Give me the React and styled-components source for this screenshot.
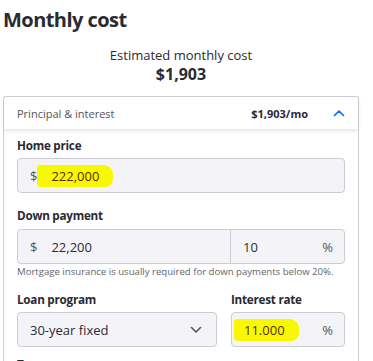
import React from 'react';
import styled, { createGlobalStyle } from 'styled-components';

const GlobalStyle = createGlobalStyle`
  body {
    margin: 0;
    background: #fff;
    font-family: "Open Sans", "Noto Sans", sans-serif;
    color: #2a2a33;
    overflow: hidden;
  }
`;

const Page = styled.div`
  padding: 6px 14px 0 3px;
  height: 361px;
  overflow: hidden;
`;

const Title = styled.h2`
  margin: 0;
  font-size: 20px;
  font-weight: 700;
  line-height: 28px;
  letter-spacing: -0.55px;
`;

const Summary = styled.div`
  margin-top: 13px;
  text-align: center;
  font-size: 13px;
  line-height: 17px;
`;

const Total = styled.div`
  font-size: 16px;
  font-weight: 700;
  line-height: 20px;
`;

const Card = styled.div`
  margin-top: 12px;
  border: 1px solid #d1d1d5;
  border-radius: 3px 3px 0 0;
  border-bottom: none;
`;

const Header = styled.div`
  display: flex;
  align-items: center;
  height: 32px;
  padding: 0 13px 0 13px;
  font-size: 11px;
  box-shadow: 0 2px 4px rgba(0, 0, 0, 0.1);
`;

const HeaderLabel = styled.span`
  flex: 1;
  color: #54545a;
`;

const HeaderValue = styled.span`
  font-weight: 700;
  margin-right: 25px;
`;

const Body = styled.div`
  padding: 8px 13px 0 13px;
`;

const Field = styled.div`
  margin-bottom: ${({ $gap }) => $gap || 14}px;
`;

const Label = styled.div`
  font-size: 11.7px;
  font-weight: 700;
  line-height: 17px;
  letter-spacing: -0.25px;
  margin-bottom: ${({ $gap }) => $gap ?? 4}px;
  margin-top: ${({ $top }) => $top || 0}px;
  white-space: nowrap;
`;

const InputBox = styled.div`
  display: flex;
  height: 35px;
  background: #f4f4f8;
  border: 1px solid #ccccd2;
  border-radius: 4px;
  box-sizing: border-box;
  font-size: 13px;
  overflow: hidden;
`;

const Segment = styled.div`
  display: flex;
  align-items: center;
  box-sizing: border-box;
  flex: ${({ $width }) => ($width ? `0 0 ${$width}px` : 1)};
  padding: 0 11px 0 12px;
  border-left: ${({ $divided }) => ($divided ? '1px solid #ccccd2' : 'none')};
`;

const Affix = styled.span`
  color: #54545a;
  margin-right: ${({ $right }) => ($right ? 0 : 14)}px;
  margin-left: ${({ $right }) => ($right ? 'auto' : 0)};
`;

const Value = styled.span`
  color: #2a2a33;
`;

const Marked = styled.span`
  background: #f8f800;
  padding: 2px 14px 2px ${({ $pad }) => $pad || 12}px;
  margin-left: ${({ $shift }) => $shift || 0}px;
  border-radius: 3px 9px 8px 4px;
  color: #5a2a10;
`;

const Hint = styled.div`
  font-size: 9.6px;
  color: #64646a;
  line-height: 14px;
  margin-top: 1px;
  white-space: nowrap;
`;

const Row = styled.div`
  display: flex;
  gap: 14px;
`;

const Column = styled.div`
  flex: ${({ $width }) => ($width ? `0 0 ${$width}px` : 1)};
`;

const Select = styled(InputBox)`
  align-items: center;
  justify-content: space-between;
  padding: 0 14px 0 12px;
`;

const Chevron = ({ up, color }) => (
  <svg width="12" height="8" viewBox="0 0 12 8" fill="none">
    <path
      d={up ? 'M1.5 6.5 L6 2 L10.5 6.5' : 'M1.5 1.5 L6 6 L10.5 1.5'}
      stroke={color}
      strokeWidth="1.6"
      strokeLinecap="round"
      strokeLinejoin="round"
    />
  </svg>
);

export default function App() {
  return (
    <>
      <GlobalStyle />
      <Page>
        <Title>Monthly cost</Title>
        <Summary>
          Estimated monthly cost
          <Total>$1,903</Total>
        </Summary>
        <Card>
          <Header>
            <HeaderLabel>Principal &amp; interest</HeaderLabel>
            <HeaderValue>$1,903/mo</HeaderValue>
            <Chevron up color="#006aff" />
          </Header>
          <Body>
            <Field>
              <Label>Home price</Label>
              <InputBox>
                <Segment>
                  <Affix>$</Affix>
                  <Marked $shift={-14} $pad={14}>222,000</Marked>
                </Segment>
              </InputBox>
            </Field>
            <Field $gap={12}>
              <Label $gap={5}>Down payment</Label>
              <InputBox>
                <Segment>
                  <Affix>$</Affix>
                  <Value>22,200</Value>
                </Segment>
                <Segment $width={114} $divided>
                  <Value>10</Value>
                  <Affix $right>%</Affix>
                </Segment>
              </InputBox>
              <Hint>Mortgage insurance is usually required for down payments below 20%.</Hint>
            </Field>
            <Row>
              <Column>
                <Label>Loan program</Label>
                <Select>
                  <Value>30-year fixed</Value>
                  <Chevron color="#54545a" />
                </Select>
              </Column>
              <Column $width={114}>
                <Label>Interest rate</Label>
                <InputBox>
                  <Segment>
                    <Marked $shift={-10} $pad={10}>11.000</Marked>
                    <Affix $right>%</Affix>
                  </Segment>
                </InputBox>
              </Column>
            </Row>
            <Label $top={9}>Term</Label>
          </Body>
        </Card>
      </Page>
    </>
  );
}
